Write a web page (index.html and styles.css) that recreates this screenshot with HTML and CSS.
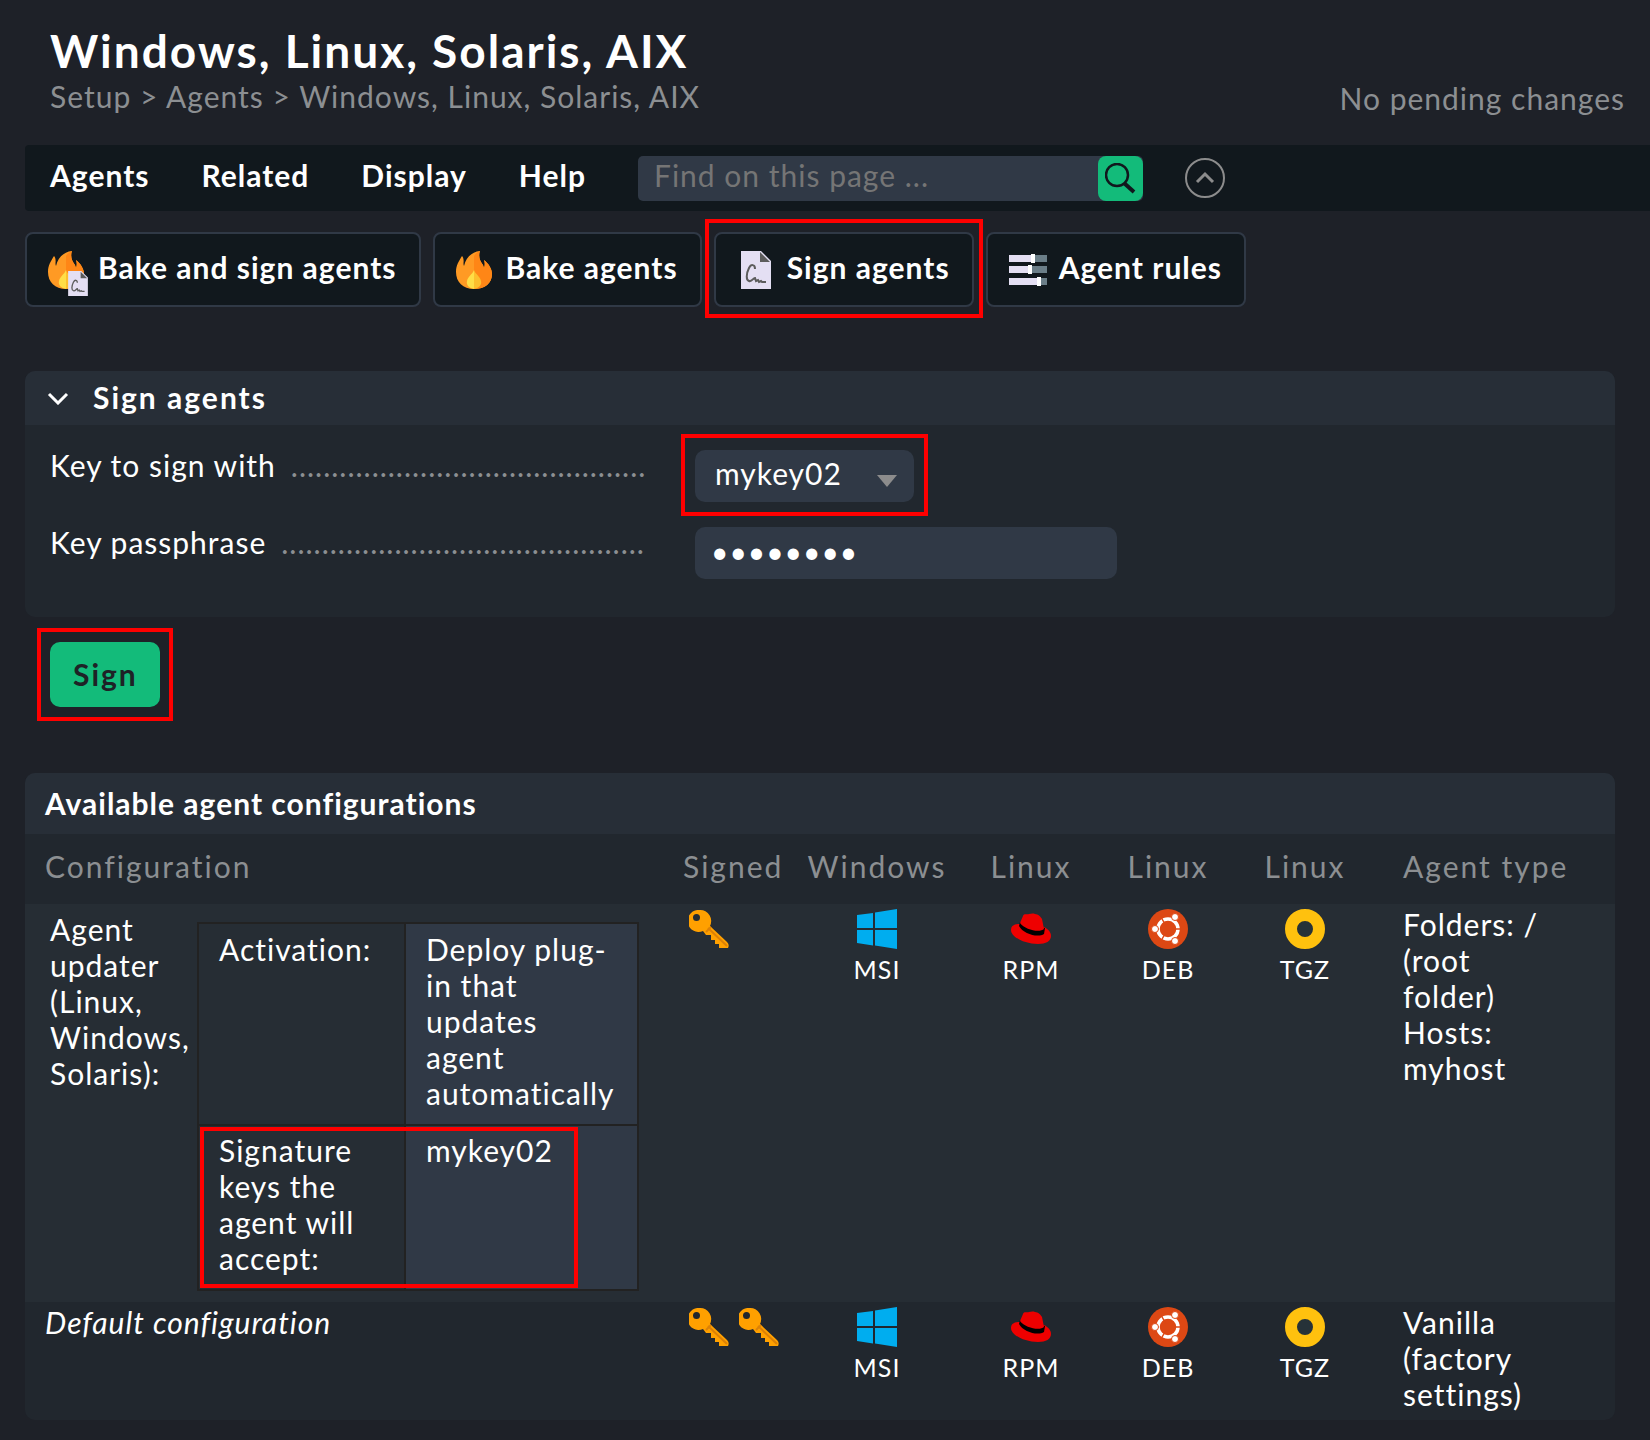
FILE: index.html
```html
<!DOCTYPE html>
<html lang="en">

<head>
    <meta charset="utf-8">
    <title>Windows, Linux, Solaris, AIX</title>
    <link rel="stylesheet" href="styles.css">
</head>

<body>

    <!-- Shared icons -->
    <svg class="symbols" width="0" height="0" aria-hidden="true">
        <symbol id="flame" viewBox="0 0 36 38">
            <path fill="#ff9a24" d="M18 38C7 38 0 31 0 21 0 14 3 10 6 5c1 1 2 3 1.500 7 0 1 0 2 .5 3C10 7 15 1 24 0c-2 5 0 10 3 14 .5 1 .5 2 1 3 1-3 1-5 0-8 5 4 8 9 8 14 0 9-7 15-18 15z" />
            <path fill="#ff8616" d="M18 38V5c1-2 3-4 6-5-2 5 0 10 3 14 .5 1 .5 2 1 3 1-3 1-5 0-8 5 4 8 9 8 14 0 9-7 15-18 15z" />
            <path fill="#ffde46" d="M18 38c-5-1-8-4-7-8 1-5 5-6 7-11z" />
            <path fill="#fdbf2d" d="M18 38c5-1 8-4 7-8-1-5-5-6-7-11z" />
        </symbol>
        <symbol id="signed-file" viewBox="0 0 30 38">
            <path fill="#e4dff3" d="M0 0h20l10 10v28H0z" />
            <path fill="#5c5c5c" d="M19 1v10h10z" />
            <path fill="none" stroke="#5c5c5c" stroke-width="2" d="M14 18c0-5-4-5-6-1-3 6-3 12 0 13 3 1 4-3 6-3l1 3 2-1 1 2 2-1 1 1h4" />
        </symbol>
        <symbol id="key" viewBox="0 0 40 38">
            <path fill="#ffa000" fill-rule="evenodd" d="M11 0a11 11 0 0 1 10 16l17 16c2 2 2 4 1 6h-9v-4h-4v-4h-4v-5h-5l-3-4A11 11 0 1 1 11 0zM7.500 4a3.500 3.500 0 1 0 0 7 3.500 3.500 0 0 0 0-7z" />
            <path fill="none" stroke="#dc8106" stroke-width="2" d="M19 18l19 18M22 17l-5 5" />
        </symbol>
        <symbol id="windows" viewBox="0 0 40 40">
            <path fill="#00adef" d="M0 6l16-2v15H0zM18 3.500L40 0v19H18zM0 21h16v15.500L0 34zM18 21h22v19l-22-3.500z" />
        </symbol>
        <symbol id="redhat" viewBox="0 0 40 40">
            <path fill="#e00" d="M9 15C3 15 0 17 0 21c0 7 13 14 27 14 8 0 13-3 13-8 0-4-3-7-7-9z" />
            <path d="M9 13l-1 4c4 8 19 12 25 8l1-6z" />
            <path fill="#e00" d="M9 14l3-7c1-3 4-1 6-2 2 0 3-1 6 0 3 0 6 3 7 5l2 10c-4 4-19 1-24-6z" />
        </symbol>
        <symbol id="ubuntu" viewBox="0 0 40 40">
            <circle cx="20" cy="20" r="20" fill="#dd4814" />
            <circle cx="20" cy="20" r="10" fill="none" stroke="#fff" stroke-width="3.500" />
            <path stroke="#dd4814" stroke-width="1.500" d="M23 20h11M18 17l-5-9M18 23l-5 9" />
            <g fill="#fff" stroke="#dd4814" stroke-width="1">
                <circle cx="7" cy="20" r="3.500" />
                <circle cx="27" cy="8" r="3.500" />
                <circle cx="27" cy="32" r="3.500" />
            </g>
        </symbol>
        <symbol id="tgz" viewBox="0 0 40 40">
            <circle cx="20" cy="20" r="14" fill="#263238" stroke="#ffc10e" stroke-width="12" />
        </symbol>
    </svg>

    <header>
        <div>
            <h1>Windows, Linux, Solaris, AIX</h1>
            <nav class="breadcrumb">
                <a href="#">Setup</a> &gt; <a href="#">Agents</a> &gt; <a href="#">Windows, Linux, Solaris, AIX</a>
            </nav>
        </div>
        <div class="changes">No pending changes</div>
    </header>

    <div class="menu-bar">
        <button type="button">Agents</button>
        <button type="button">Related</button>
        <button type="button">Display</button>
        <button type="button">Help</button>
        <form class="search" role="search">
            <input type="text" aria-label="Find on this page" placeholder="Find on this page ...">
            <button type="submit" aria-label="Search">
                <svg width="31" height="31" viewBox="0 0 31 31" fill="none" stroke="#11181d">
                    <circle cx="12" cy="12" r="11" stroke-width="2.500" />
                    <path stroke-width="4" d="M19 20l10 9" />
                </svg>
            </button>
        </form>
        <button type="button" class="toggle" aria-label="Hide suggestions">
            <svg width="40" height="40" viewBox="0 0 40 40" fill="none" stroke="#8c8c8c">
                <circle cx="20" cy="20" r="19" stroke-width="2" />
                <path stroke-width="3" d="M12 24l8-8 8 8" />
            </svg>
        </button>
    </div>

    <div class="suggestions">
        <button type="button">
            <svg width="40" height="46" viewBox="0 0 40 46">
                <use href="#flame" x="0" y="0" width="36" height="38" />
                <use href="#signed-file" x="20" y="20" width="20" height="25" />
            </svg>
            <span>Bake and sign agents</span>
        </button>
        <button type="button">
            <svg width="40" height="38"><use href="#flame" width="36" height="38" /></svg>
            <span>Bake agents</span>
        </button>
        <div class="marked tool">
            <button type="button">
                <svg width="40" height="38"><use href="#signed-file" x="4" width="30" height="38" /></svg>
                <span>Sign agents</span>
            </button>
        </div>
        <button type="button">
            <svg width="40" height="32" viewBox="0 0 40 32">
                <path fill="#6b7e88" d="M0 1h38v7H0zM0 12h38v7H0zM0 24h38v7H0z" />
                <path fill="#e4dff3" d="M0 1h24v7H0zM0 12h20v7H0zM0 24h29v7H0z" />
                <path fill="#fff" d="M22 0h4v9h-4zM19 11h4v9h-4zM28 23h4v9h-4z" />
            </svg>
            <span>Agent rules</span>
        </button>
    </div>

    <form class="sign-form">
        <section class="panel">
            <h2>
                <svg width="22" height="16" viewBox="0 0 22 16" fill="none" stroke="#fff" stroke-width="3">
                    <path d="M2 5l9 9 9-9" />
                </svg>
                <span>Sign agents</span>
            </h2>
            <div class="fields">
                <label for="key-select">Key to sign with</label>
                <div class="marked key-field">
                    <select id="key-select">
                        <option>mykey02</option>
                    </select>
                </div>
                <label for="passphrase">Key passphrase</label>
                <input type="password" id="passphrase" value="password">
            </div>
        </section>
        <div class="marked sign">
            <button type="submit">Sign</button>
        </div>
    </form>

    <section class="panel">
        <h3>Available agent configurations</h3>
        <table class="configs">
            <colgroup>
                <col>
                <col class="col-signed">
                <col class="col-windows">
                <col class="col-rpm">
                <col class="col-deb">
                <col class="col-rpm">
                <col class="col-type">
            </colgroup>
            <thead>
                <tr>
                    <th>Configuration</th>
                    <th class="signed">Signed</th>
                    <th class="os">Windows</th>
                    <th class="os">Linux</th>
                    <th class="os">Linux</th>
                    <th class="os">Linux</th>
                    <th class="type">Agent type</th>
                </tr>
            </thead>
            <tbody>
                <tr>
                    <td class="rule">
                        <div class="rule-content">
                            <div class="rule-name">Agent updater (Linux, Windows, Solaris):</div>
                            <table class="values">
                                <tr>
                                    <td>Activation:</td>
                                    <td>Deploy plug-in that updates agent automatically</td>
                                </tr>
                                <tr>
                                    <td class="accepted">Signature keys the agent will accept:</td>
                                    <td>mykey02</td>
                                </tr>
                            </table>
                        </div>
                    </td>
                    <td class="signed"><div class="keys"><svg width="40" height="38"><use href="#key" /></svg></div></td>
                    <td class="os"><a href="#"><svg width="40" height="40"><use href="#windows" /></svg>MSI</a></td>
                    <td class="os"><a href="#"><svg width="40" height="40"><use href="#redhat" /></svg>RPM</a></td>
                    <td class="os"><a href="#"><svg width="40" height="40"><use href="#ubuntu" /></svg>DEB</a></td>
                    <td class="os"><a href="#"><svg width="40" height="40"><use href="#tgz" /></svg>TGZ</a></td>
                    <td class="type">Folders: / (root folder)<br>Hosts: myhost</td>
                </tr>
                <tr>
                    <td><i>Default configuration</i></td>
                    <td class="signed"><div class="keys"><svg width="40" height="38"><use href="#key" /></svg><svg width="40" height="38"><use href="#key" /></svg></div></td>
                    <td class="os"><a href="#"><svg width="40" height="40"><use href="#windows" /></svg>MSI</a></td>
                    <td class="os"><a href="#"><svg width="40" height="40"><use href="#redhat" /></svg>RPM</a></td>
                    <td class="os"><a href="#"><svg width="40" height="40"><use href="#ubuntu" /></svg>DEB</a></td>
                    <td class="os"><a href="#"><svg width="40" height="40"><use href="#tgz" /></svg>TGZ</a></td>
                    <td class="type">Vanilla (factory settings)</td>
                </tr>
            </tbody>
        </table>
    </section>

</body>

</html>
```
FILE: styles.css
```css
*,
*::before,
*::after {
    box-sizing: border-box;
}

body {
    margin: 0;
    padding: 24px 0 20px 25px;
    background: #1e2128;
    color: #fff;
    font-family: Lato, sans-serif;
    font-size: 30px;
    line-height: 36px;
    letter-spacing: 1px;
}

button,
input,
select {
    border: 0;
    color: inherit;
    font: inherit;
    letter-spacing: inherit;
}

a {
    color: inherit;
    text-decoration: none;
}

h1,
h2,
h3 {
    margin: 0;
    font-size: 30px;
    line-height: 36px;
}

svg {
    flex: none;
}

.symbols {
    position: absolute;
}

header {
    display: flex;
    justify-content: space-between;
    align-items: flex-end;
    padding: 0 25px;
}

header h1 {
    font-size: 46px;
    line-height: 54px;
    letter-spacing: 2px;
}

.breadcrumb,
.changes {
    color: #8c8f92;
}

.breadcrumb {
    padding-bottom: 2px;
}

.menu-bar {
    display: flex;
    align-items: center;
    height: 66px;
    margin-top: 29px;
    padding-left: 25px;
    border-radius: 4px 0 0 4px;
    background: #11181d;
}

.menu-bar > button {
    margin-right: 52px;
    padding: 0 0 6px;
    background: none;
    font-weight: bold;
}

.search {
    display: flex;
    width: 505px;
    border-radius: 5px;
    background: #303946;
}

.search input {
    flex: 1;
    min-width: 0;
    padding: 0 16px 6px;
    background: none;
}

.search input::placeholder {
    color: #757575;
}

.search button {
    display: flex;
    align-items: center;
    justify-content: center;
    width: 45px;
    height: 45px;
    padding: 0;
    border-radius: 8px;
    background: #13bb7a;
}

.menu-bar .toggle {
    display: flex;
    margin-left: 42px;
    padding: 0;
}

.suggestions {
    display: flex;
    gap: 12px;
    margin-top: 21px;
}

.suggestions button {
    display: flex;
    gap: 10px;
    height: 75px;
    padding: 0 22px 0 21px;
    border: 2px solid #303946;
    border-radius: 8px;
    background: #11181d;
    align-items: center;
    font-weight: bold;
}

.suggestions span {
    padding-bottom: 5px;
}

.suggestions svg[height="46"] {
    margin-top: 8px;
}

/* Red frames around the parts to look at */
.marked {
    position: relative;
    display: flex;
    width: fit-content;
}

.marked::after,
.accepted::after {
    content: "";
    position: absolute;
    border: 4px solid #f00;
    pointer-events: none;
}

.tool::after {
    inset: -13px -9px -11px;
}

.key-field::after {
    inset: -16px -14px -14px;
}

.sign::after {
    inset: -14px -13px;
}

.sign-form {
    margin: 64px 0 66px;
}

.panel {
    margin-right: 35px;
    border-radius: 10px;
    background: #21272e;
    overflow: hidden;
}

.panel h2 {
    display: flex;
    align-items: center;
    gap: 24px;
    padding: 8px 22px 10px;
    background: #272e37;
    letter-spacing: 2px;
}

.panel h3 {
    padding: 12px 20px 13px;
    background: #272e37;
}

.fields {
    display: grid;
    grid-template-columns: 595px 1fr;
    gap: 25px 50px;
    padding: 25px 25px 38px;
}

.fields label {
    display: flex;
    gap: 15px;
    height: 36px;
    margin-top: -3px;
    overflow: hidden;
    white-space: nowrap;
}

.fields label::after {
    content: "............................................................";
    flex: 1;
    overflow: hidden;
    color: #8c8f92;
}

.fields select,
.fields input {
    height: 52px;
    border-radius: 10px;
    background: #303946;
}

.fields select {
    width: 219px;
    padding: 0 20px 6px;
    appearance: none;
}

.key-field::before {
    content: "";
    position: absolute;
    top: 25px;
    right: 17px;
    border: 10px solid transparent;
    border-top: 12px solid #8c8c8c;
    border-bottom: 0;
    pointer-events: none;
}

.fields input {
    width: 422px;
    padding: 0 16px 4px;
}

.sign {
    margin: 25px 0 0 25px;
}

.sign button {
    height: 65px;
    padding: 0 22px 2px 23px;
    border-radius: 10px;
    background: #13bb7a;
    color: #1e2226;
    font-weight: bold;
    letter-spacing: 2px;
}

.configs {
    width: 100%;
    table-layout: fixed;
    border-collapse: collapse;
}

.col-signed {
    width: 124px;
}

.col-windows {
    width: 160px;
}

.col-rpm {
    width: 148px;
}

.col-deb {
    width: 126px;
}

.col-type {
    width: 236px;
}

.configs th {
    height: 70px;
    padding: 0 0 6px 20px;
    color: #8c8f92;
    font-weight: normal;
    letter-spacing: 2px;
    text-align: left;
    white-space: nowrap;
}

.configs td {
    padding: 2px 0 8px 20px;
    vertical-align: top;
}

.configs tbody tr:first-child {
    background: #262d34;
}

.configs .signed {
    padding-left: 10px;
}

.configs .os {
    padding-left: 0;
    text-align: center;
}

.configs .type {
    padding-left: 24px;
}

.configs td.type {
    padding-right: 60px;
}

.os a {
    display: flex;
    flex-direction: column;
    align-items: center;
    gap: 2px;
    padding-top: 3px;
    font-size: 25px;
}

.keys {
    display: flex;
    gap: 10px;
    padding: 4px 6px;
}

.configs .rule {
    padding: 7px 34px 11px 25px;
}

.rule-content {
    display: flex;
}

.rule-name {
    flex: 0 0 147px;
}

.values {
    flex: 1;
    margin-top: 11px;
    border-collapse: collapse;
}

.values tr {
    background: none;
}

.values td,
.configs .values td {
    position: relative;
    width: 233px;
    padding: 7px 18px 13px 20px;
    border: 2px solid #222;
    background: #303946;
}

.configs .values td:first-child {
    width: 207px;
    background: #262d34;
}

.configs .values tr:last-child td {
    padding-top: 6px;
}

.accepted::after {
    top: 1px;
    left: 1px;
    width: 378px;
    height: 161px;
    z-index: 1;
}
```
